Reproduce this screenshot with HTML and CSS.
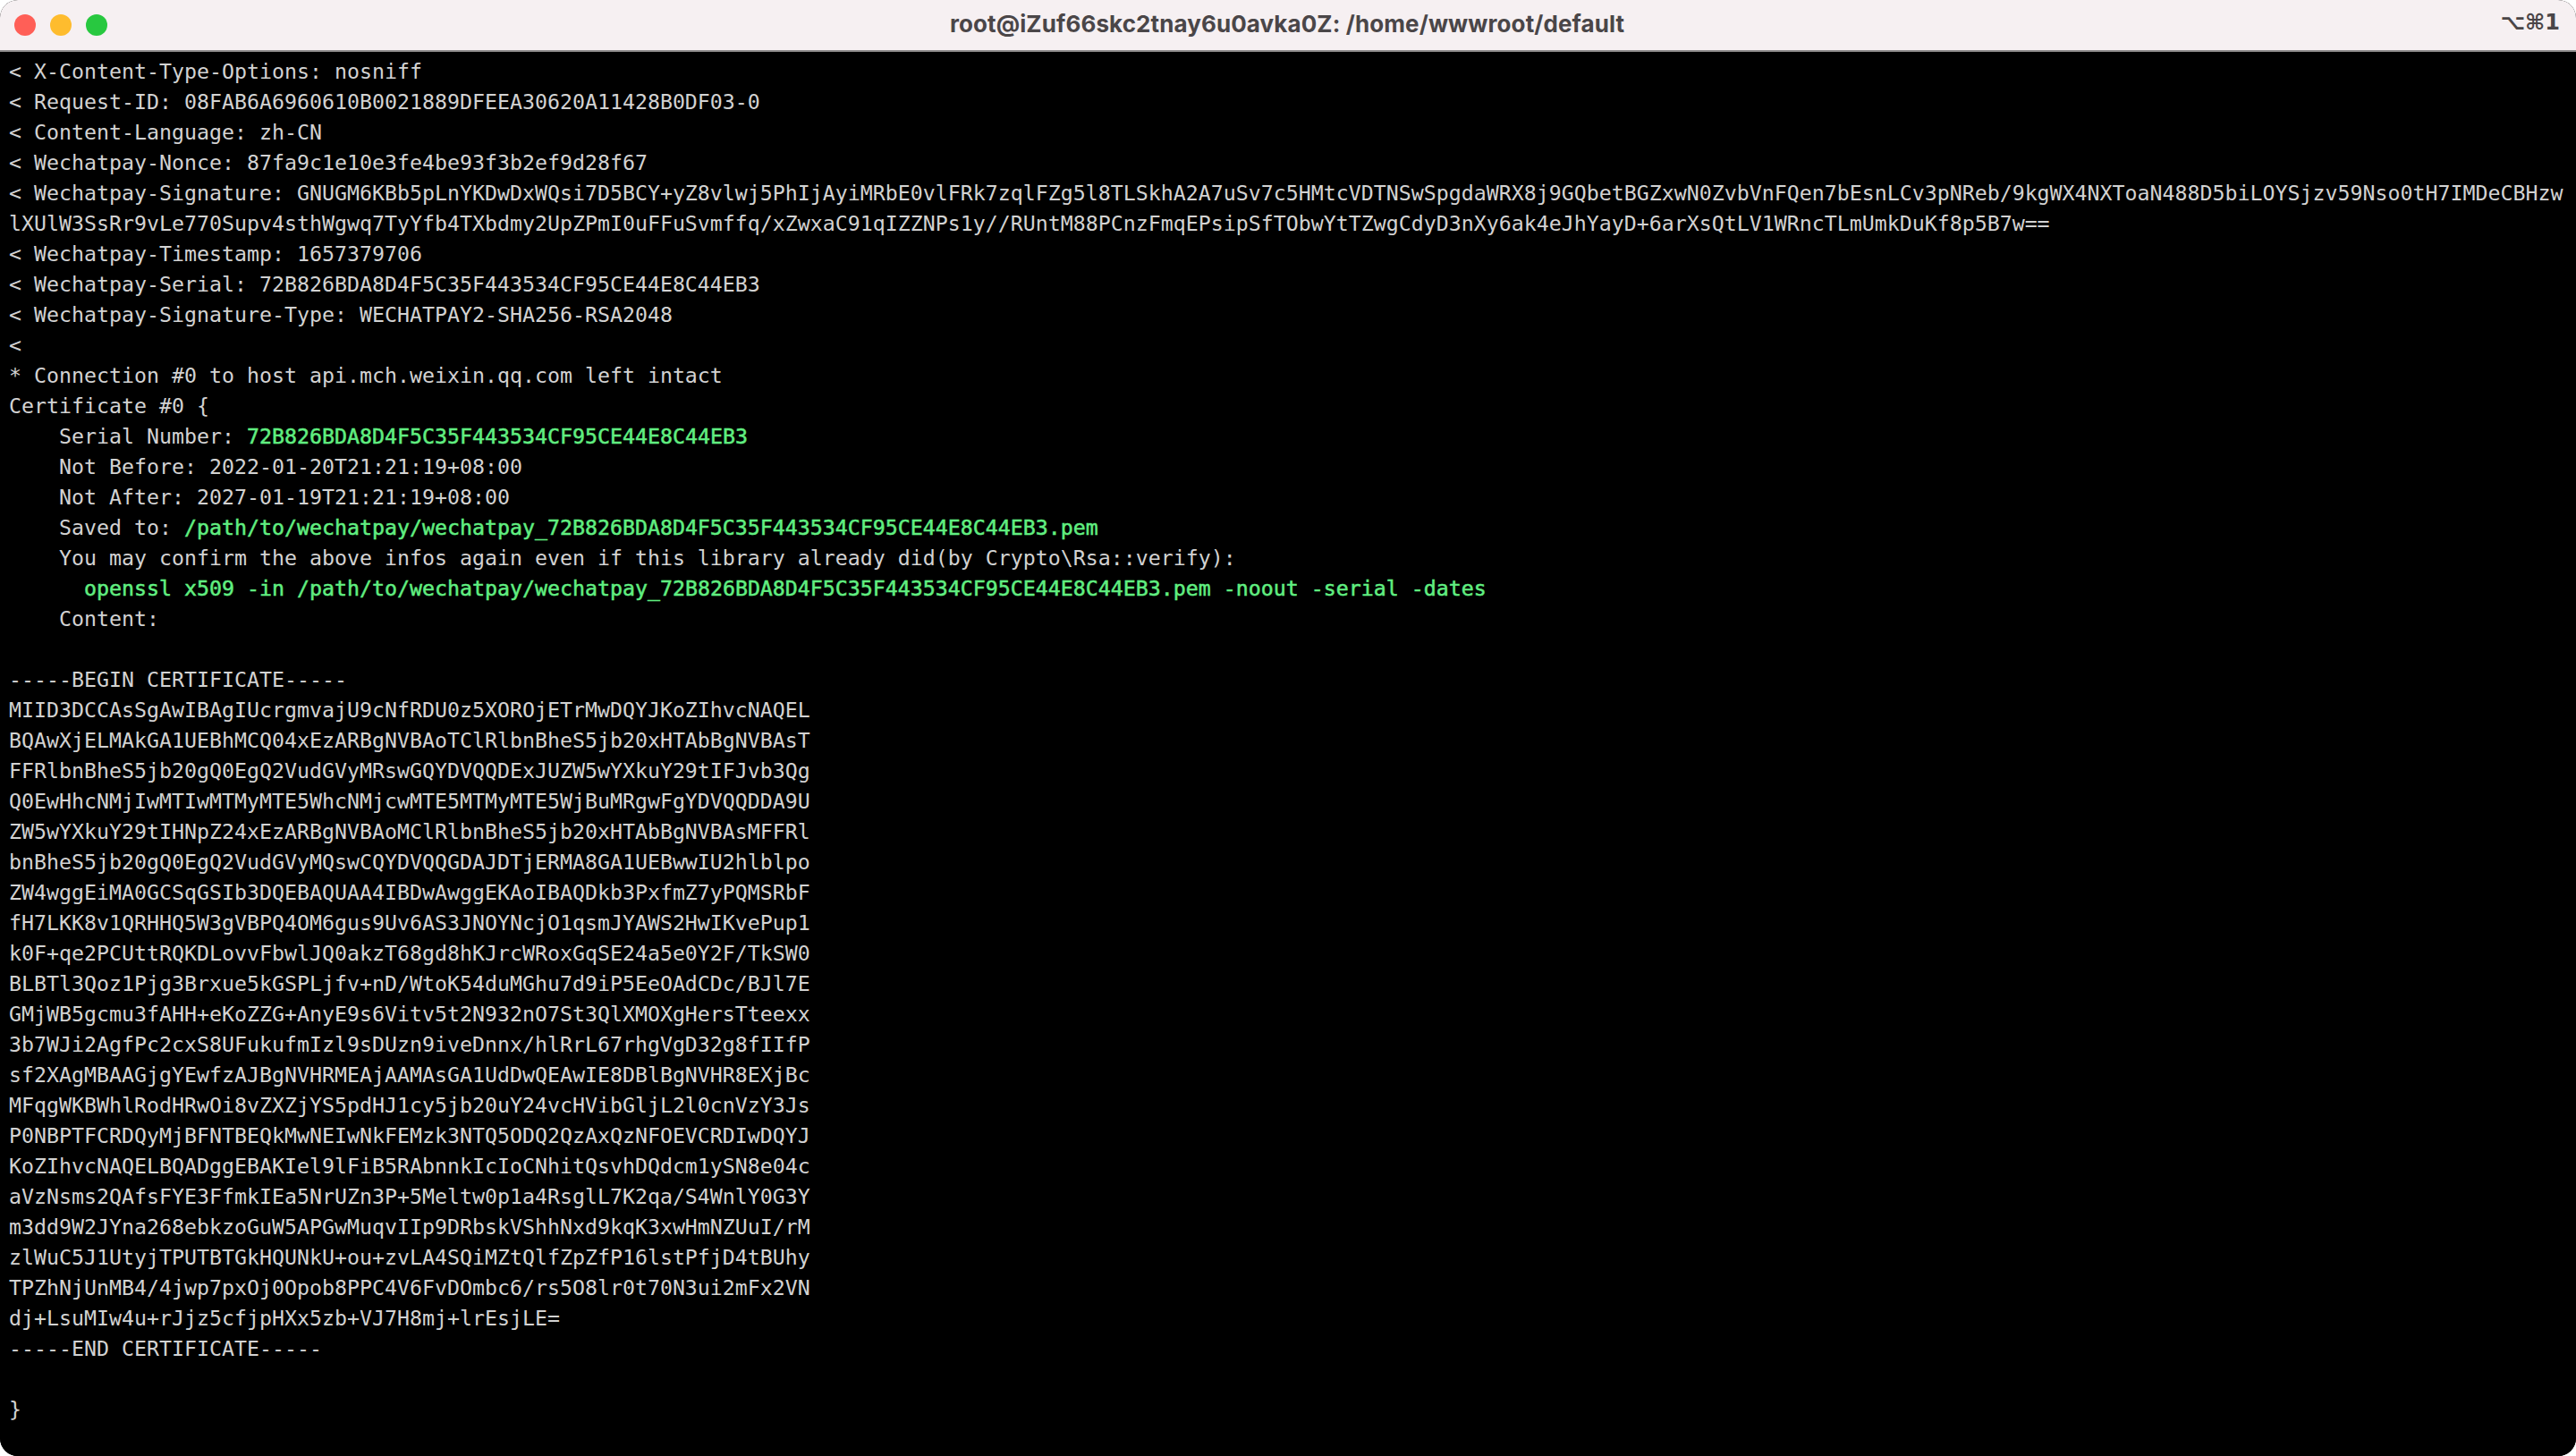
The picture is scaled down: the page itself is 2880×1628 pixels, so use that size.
FILE: index.html
```html
<!DOCTYPE html>
<html lang="en">
<head>
<meta charset="utf-8">
<title>Terminal</title>
<link rel="stylesheet" href="styles.css">
</head>
<body>
<div class="window">
<header class="titlebar">
<div class="lights"><span class="light red"></span><span class="light yellow"></span><span class="light green"></span></div>
<div class="title">root@iZuf66skc2tnay6u0avka0Z: /home/wwwroot/default</div>
<div class="shortcut">⌥⌘1</div>
</header>
<pre class="term">&lt; X-Content-Type-Options: nosniff
&lt; Request-ID: 08FAB6A6960610B0021889DFEEA30620A11428B0DF03-0
&lt; Content-Language: zh-CN
&lt; Wechatpay-Nonce: 87fa9c1e10e3fe4be93f3b2ef9d28f67
&lt; Wechatpay-Signature: GNUGM6KBb5pLnYKDwDxWQsi7D5BCY+yZ8vlwj5PhIjAyiMRbE0vlFRk7zqlFZg5l8TLSkhA2A7uSv7c5HMtcVDTNSwSpgdaWRX8j9GQbetBGZxwN0ZvbVnFQen7bEsnLCv3pNReb/9kgWX4NXToaN488D5biLOYSjzv59Nso0tH7IMDeCBHzw
lXUlW3SsRr9vLe770Supv4sthWgwq7TyYfb4TXbdmy2UpZPmI0uFFuSvmffq/xZwxaC91qIZZNPs1y//RUntM88PCnzFmqEPsipSfTObwYtTZwgCdyD3nXy6ak4eJhYayD+6arXsQtLV1WRncTLmUmkDuKf8p5B7w==
&lt; Wechatpay-Timestamp: 1657379706
&lt; Wechatpay-Serial: 72B826BDA8D4F5C35F443534CF95CE44E8C44EB3
&lt; Wechatpay-Signature-Type: WECHATPAY2-SHA256-RSA2048
&lt;
* Connection #0 to host api.mch.weixin.qq.com left intact
Certificate #0 {
    Serial Number: <span class="hl">72B826BDA8D4F5C35F443534CF95CE44E8C44EB3</span>
    Not Before: 2022-01-20T21:21:19+08:00
    Not After: 2027-01-19T21:21:19+08:00
    Saved to: <span class="hl">/path/to/wechatpay/wechatpay_72B826BDA8D4F5C35F443534CF95CE44E8C44EB3.pem</span>
    You may confirm the above infos again even if this library already did(by Crypto\Rsa::verify):
      <span class="hl">openssl x509 -in /path/to/wechatpay/wechatpay_72B826BDA8D4F5C35F443534CF95CE44E8C44EB3.pem -noout -serial -dates</span>
    Content:

-----BEGIN CERTIFICATE-----
MIID3DCCAsSgAwIBAgIUcrgmvajU9cNfRDU0z5XOROjETrMwDQYJKoZIhvcNAQEL
BQAwXjELMAkGA1UEBhMCQ04xEzARBgNVBAoTClRlbnBheS5jb20xHTAbBgNVBAsT
FFRlbnBheS5jb20gQ0EgQ2VudGVyMRswGQYDVQQDExJUZW5wYXkuY29tIFJvb3Qg
Q0EwHhcNMjIwMTIwMTMyMTE5WhcNMjcwMTE5MTMyMTE5WjBuMRgwFgYDVQQDDA9U
ZW5wYXkuY29tIHNpZ24xEzARBgNVBAoMClRlbnBheS5jb20xHTAbBgNVBAsMFFRl
bnBheS5jb20gQ0EgQ2VudGVyMQswCQYDVQQGDAJDTjERMA8GA1UEBwwIU2hlblpo
ZW4wggEiMA0GCSqGSIb3DQEBAQUAA4IBDwAwggEKAoIBAQDkb3PxfmZ7yPQMSRbF
fH7LKK8v1QRHHQ5W3gVBPQ4OM6gus9Uv6AS3JNOYNcjO1qsmJYAWS2HwIKvePup1
k0F+qe2PCUttRQKDLovvFbwlJQ0akzT68gd8hKJrcWRoxGqSE24a5e0Y2F/TkSW0
BLBTl3Qoz1Pjg3Brxue5kGSPLjfv+nD/WtoK54duMGhu7d9iP5EeOAdCDc/BJl7E
GMjWB5gcmu3fAHH+eKoZZG+AnyE9s6Vitv5t2N932nO7St3QlXMOXgHersTteexx
3b7WJi2AgfPc2cxS8UFukufmIzl9sDUzn9iveDnnx/hlRrL67rhgVgD32g8fIIfP
sf2XAgMBAAGjgYEwfzAJBgNVHRMEAjAAMAsGA1UdDwQEAwIE8DBlBgNVHR8EXjBc
MFqgWKBWhlRodHRwOi8vZXZjYS5pdHJ1cy5jb20uY24vcHVibGljL2l0cnVzY3Js
P0NBPTFCRDQyMjBFNTBEQkMwNEIwNkFEMzk3NTQ5ODQ2QzAxQzNFOEVCRDIwDQYJ
KoZIhvcNAQELBQADggEBAKIel9lFiB5RAbnnkIcIoCNhitQsvhDQdcm1ySN8e04c
aVzNsms2QAfsFYE3FfmkIEa5NrUZn3P+5Meltw0p1a4RsglL7K2qa/S4WnlY0G3Y
m3dd9W2JYna268ebkzoGuW5APGwMuqvIIp9DRbskVShhNxd9kqK3xwHmNZUuI/rM
zlWuC5J1UtyjTPUTBTGkHQUNkU+ou+zvLA4SQiMZtQlfZpZfP16lstPfjD4tBUhy
TPZhNjUnMB4/4jwp7pxOj0Opob8PPC4V6FvDOmbc6/rs5O8lr0t70N3ui2mFx2VN
dj+LsuMIw4u+rJjz5cfjpHXx5zb+VJ7H8mj+lrEsjLE=
-----END CERTIFICATE-----

}</pre>
</div>
</body>
</html>
```
FILE: styles.css
```css
html, body {
  margin: 0;
  height: 100%;
  background: #fff;
}

.window {
  display: flex;
  flex-direction: column;
  height: 100%;
  border-radius: 20px;
  overflow: hidden;
  background: #000;
}

.titlebar {
  display: grid;
  grid-template-columns: 1fr auto 1fr;
  align-items: center;
  height: 56px;
  flex: none;
  padding: 0 18px 0 16px;
  background: #f6f0f2;
  border-bottom: 2px solid #8f8c8d;
}

.lights {
  display: flex;
  gap: 16px;
}

.light {
  width: 24px;
  height: 24px;
  border-radius: 50%;
}

.red { background: #ff5f57; }
.yellow { background: #febc2e; }
.green { background: #28c840; }

.title {
  margin-bottom: 4px;
  font: 700 26px Inter, "Liberation Sans", sans-serif;
  letter-spacing: 0.1px;
  color: #4a4648;
}

.shortcut {
  justify-self: end;
  margin-bottom: 6px;
  font: bold 24px "DejaVu Sans", sans-serif;
  color: #4a4648;
}

.term {
  flex: 1;
  margin: 0;
  padding: 5px 0 0 10px;
  font: 23.25px/34px "DejaVu Sans Mono", monospace;
  color: #d2d2d2;
  background: #000;
  overflow: hidden;
}

.hl {
  color: #60ee80;
  -webkit-text-stroke: 0.5px #60ee80;
}
```
